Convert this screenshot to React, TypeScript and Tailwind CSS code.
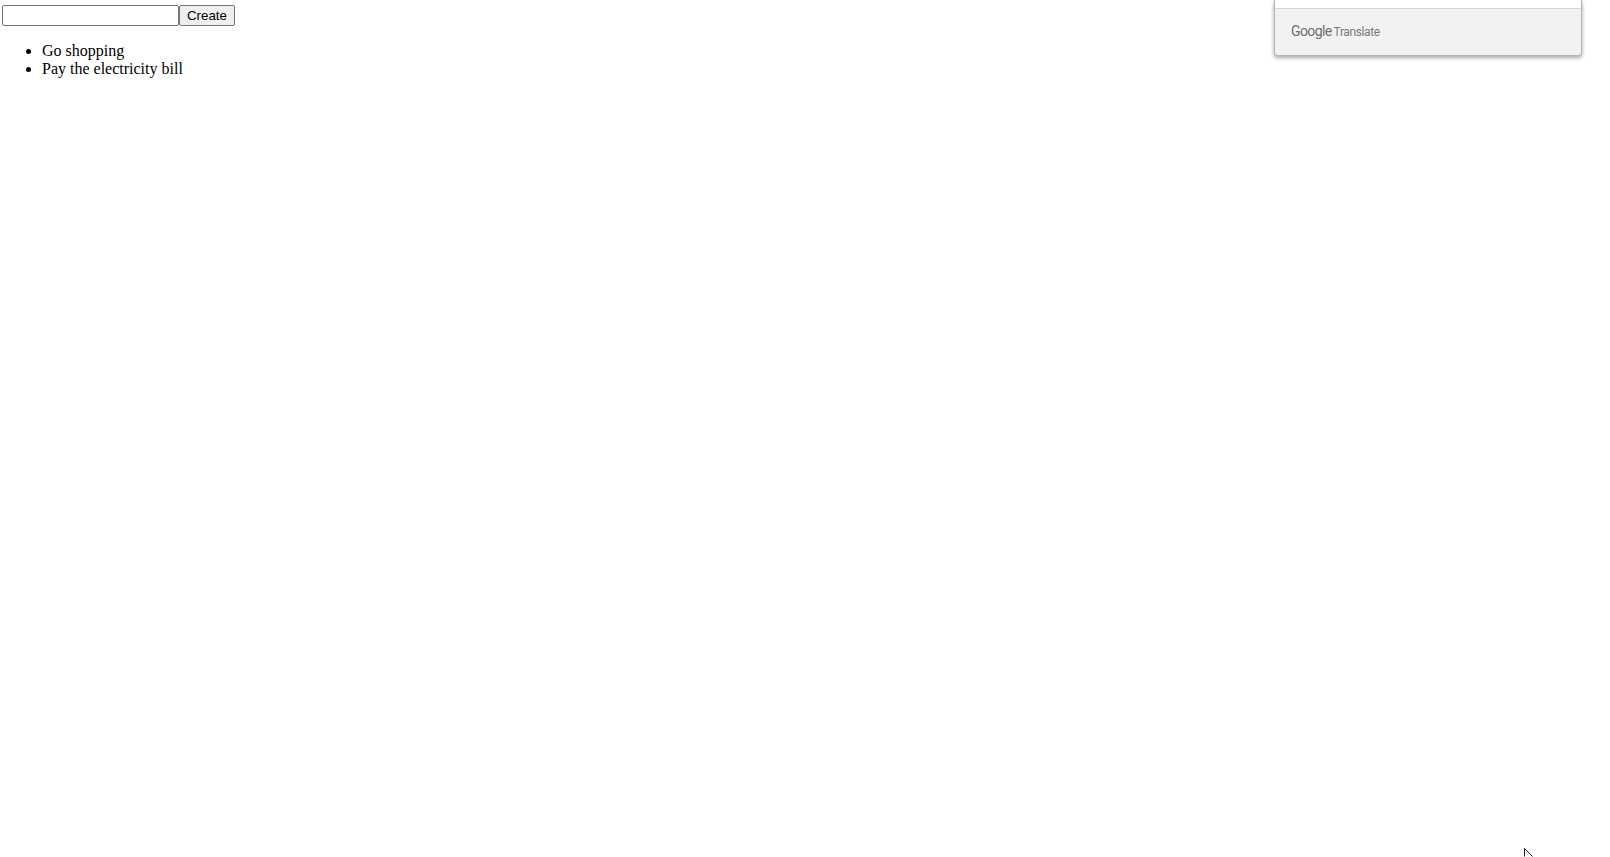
import { Fragment } from 'react';

const todos = ['Go shopping', 'Pay the electricity bill'];

function TranslatePopup() {
  return (
    <div className="absolute left-[1274px] top-0 w-[308px] h-[56px] flex flex-col rounded-b-[4px] border-x border-b border-[#b4b4b4] bg-white shadow-[0_2px_4px_rgba(0,0,0,0.35)]">
      <div className="h-[9px] border-b border-[#d6d6d6] bg-white" />
      <div className="flex-1 flex items-baseline pl-[16px] pt-[15px] bg-[#f2f2f2] rounded-b-[4px]">
        <span className="font-['Roboto',sans-serif] text-[14px] leading-none tracking-[-0.6px] text-[#6b6e72]">Google</span>
        <span className="ml-[2px] font-['Roboto',sans-serif] text-[12px] leading-none tracking-[-0.4px] text-[#777a7e]">Translate</span>
      </div>
    </div>
  );
}

export default function App() {
  return (
    <Fragment>
      <div className="relative min-h-[857px] bg-white text-black font-['Liberation_Serif',serif] text-[16px] overflow-hidden">
        <div className="pl-[2px] pt-[5px]">
          <form className="flex h-[21px]" onSubmit={e => e.preventDefault()}>
            <input type="text" className="w-[177px] h-[21px] rounded-[2px] border border-[#767676] bg-white" />
            <button type="submit" className="w-[56px] h-[21px] rounded-[2px] border border-[#767676] bg-[#efefef] font-['Liberation_Sans',sans-serif] text-[13.33px] leading-none">Create</button>
          </form>
          <ul className="mt-[16px] pl-[40px] list-disc leading-[18px]">
            {todos.map(todo => (
              <li key={todo}>{todo}</li>
            ))}
          </ul>
        </div>

        <TranslatePopup />

        {/* mouse cursor, cut off by the bottom edge */}
        <svg className="absolute left-[1524px] top-[848px]" width="12" height="9" viewBox="0 0 12 9">
          <path d="M0.5 0.5 V8.5 M0.5 0.5 L8.5 8.5" fill="none" stroke="#1d1a3a" strokeWidth="1" />
        </svg>
      </div>
    </Fragment>
  );
}
